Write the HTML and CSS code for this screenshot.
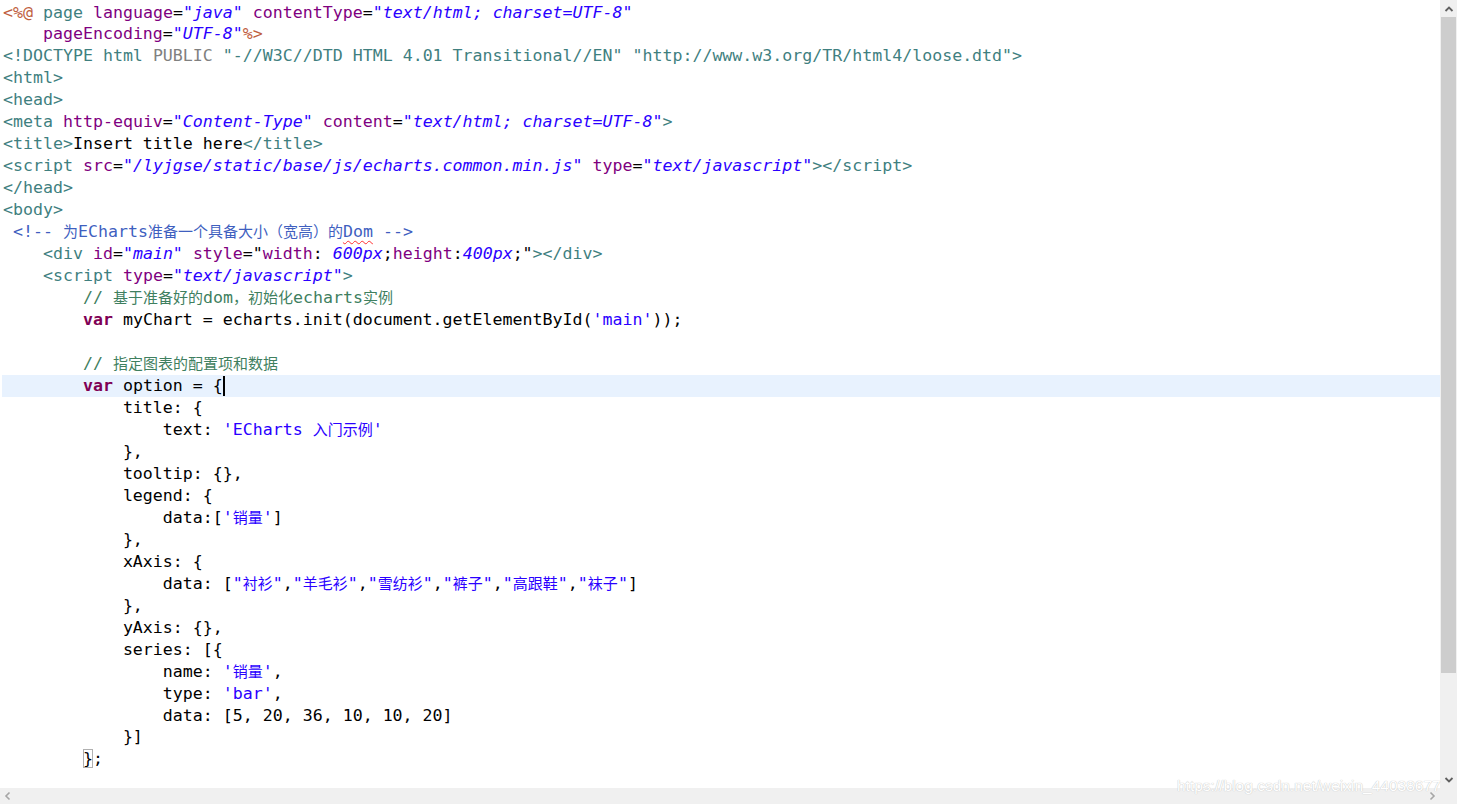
FILE: index.html
```html
<!DOCTYPE html>
<html>
<head>
<meta charset="utf-8">
<link rel="stylesheet" href="styles.css">
</head>
<body>
<div class="editor">
  <div class="left">
    <div class="code">
<div class="ln"><span class="dl">&lt;%@</span> <span class="tg">page</span> <span class="an">language</span>=<span class="av">"java"</span> <span class="an">contentType</span>=<span class="av">"text/html; charset=UTF-8"</span></div>
<div class="ln">    <span class="an">pageEncoding</span>=<span class="av">"UTF-8"</span><span class="dl">%&gt;</span></div>
<div class="ln"><span class="tg">&lt;!DOCTYPE html</span> <span class="dt">PUBLIC</span> <span class="dr">"-//W3C//DTD HTML 4.01 Transitional//EN"</span> <span class="dr">"http://www.w3.org/TR/html4/loose.dtd"</span><span class="tg">&gt;</span></div>
<div class="ln"><span class="tg">&lt;html&gt;</span></div>
<div class="ln"><span class="tg">&lt;head&gt;</span></div>
<div class="ln"><span class="tg">&lt;meta</span> <span class="an">http-equiv</span>=<span class="av">"Content-Type"</span> <span class="an">content</span>=<span class="av">"text/html; charset=UTF-8"</span><span class="tg">&gt;</span></div>
<div class="ln"><span class="tg">&lt;title&gt;</span>Insert title here<span class="tg">&lt;/title&gt;</span></div>
<div class="ln"><span class="tg">&lt;script</span> <span class="an">src</span>=<span class="av">"/lyjgse/static/base/js/echarts.common.min.js"</span> <span class="an">type</span>=<span class="av">"text/javascript"</span><span class="tg">&gt;&lt;/script&gt;</span></div>
<div class="ln"><span class="tg">&lt;/head&gt;</span></div>
<div class="ln"><span class="tg">&lt;body&gt;</span></div>
<div class="ln"><span class="cm"> &lt;!-- <span class="c">为</span>ECharts<span class="c">准备一个具备大小（宽高）的</span><span class="sp">Dom</span> --&gt;</span></div>
<div class="ln">    <span class="tg">&lt;div</span> <span class="an">id</span>=<span class="av">"main"</span> <span class="an">style</span>="<span class="an">width</span>:<span class="av"> 600px</span>;<span class="an">height</span>:<span class="av">400px</span>;"<span class="tg">&gt;&lt;/div&gt;</span></div>
<div class="ln">    <span class="tg">&lt;script</span> <span class="an">type</span>=<span class="av">"text/javascript"</span><span class="tg">&gt;</span></div>
<div class="ln">        <span class="jc">// <span class="c">基于准备好的</span>dom<span class="c">，初始化</span>echarts<span class="c">实例</span></span></div>
<div class="ln">        <span class="kw">var</span> myChart = echarts.init(document.getElementById(<span class="st">'main'</span>));</div>
<div class="ln"> </div>
<div class="ln">        <span class="jc">// <span class="c">指定图表的配置项和数据</span></span></div>
<div class="ln cur">        <span class="kw">var</span> option = {<span class="caret"></span></div>
<div class="ln">            title: {</div>
<div class="ln">                text: <span class="st">'ECharts <span class="c">入门示例</span>'</span></div>
<div class="ln">            },</div>
<div class="ln">            tooltip: {},</div>
<div class="ln">            legend: {</div>
<div class="ln">                data:[<span class="st">'<span class="c">销量</span>'</span>]</div>
<div class="ln">            },</div>
<div class="ln">            xAxis: {</div>
<div class="ln">                data: [<span class="st">"<span class="c">衬衫</span>"</span>,<span class="st">"<span class="c">羊毛衫</span>"</span>,<span class="st">"<span class="c">雪纺衫</span>"</span>,<span class="st">"<span class="c">裤子</span>"</span>,<span class="st">"<span class="c">高跟鞋</span>"</span>,<span class="st">"<span class="c">袜子</span>"</span>]</div>
<div class="ln">            },</div>
<div class="ln">            yAxis: {},</div>
<div class="ln">            series: [{</div>
<div class="ln">                name: <span class="st">'<span class="c">销量</span>'</span>,</div>
<div class="ln">                type: <span class="st">'bar'</span>,</div>
<div class="ln">                data: [5, 20, 36, 10, 10, 20]</div>
<div class="ln">            }]</div>
<div class="ln">        <span class="bm">}</span>;</div>
    </div>
    <div class="hscroll">
      <svg class="arr" width="10" height="10" viewBox="0 0 10 10"><path d="M6.5 1.5 L3 5 L6.5 8.5" fill="none" stroke="#a6a6a6" stroke-width="1.6"/></svg>
      <svg class="arr" width="10" height="10" viewBox="0 0 10 10"><path d="M3.5 1.5 L7 5 L3.5 8.5" fill="none" stroke="#a6a6a6" stroke-width="1.6"/></svg>
    </div>
  </div>
  <div class="vscroll">
    <div class="vbtn"><svg width="10" height="10" viewBox="0 0 10 10"><path d="M1.5 7 L5 3.5 L8.5 7" fill="none" stroke="#606060" stroke-width="1.8"/></svg></div>
    <div class="thumb"></div>
    <div class="track"></div>
    <div class="vbtn"><svg width="10" height="10" viewBox="0 0 10 10"><path d="M1.5 3 L5 6.5 L8.5 3" fill="none" stroke="#606060" stroke-width="1.8"/></svg></div>
    <div class="corner"></div>
  </div>
  <div class="wm">https://blog.csdn.net/weixin_44038677</div>
</div>
</body>
</html>
```
FILE: styles.css
```css
html, body {
  margin: 0;
  padding: 0;
  background: #ffffff;
}
.editor {
  position: relative;
  display: flex;
  width: 1457px;
  height: 804px;
  overflow: hidden;
}
.left {
  flex: 1;
  display: flex;
  flex-direction: column;
  min-width: 0;
}
.code {
  flex: 1;
  padding: 1.5px 0 0 2px;
  font-family: "DejaVu Sans Mono", "Liberation Mono", monospace;
  font-size: 16.6px;
  color: #000000;
  overflow: hidden;
}
.ln {
  height: 21.98px;
  line-height: 21.98px;
  white-space: pre;
  padding-left: 1px;
}
.cur {
  background: #e8f2fe;
}
.c {
  font-family: "Noto Sans CJK SC", sans-serif;
  font-size: 15px;
  line-height: 1;
  font-style: normal;
}
.dl { color: #bf5f3f; }
.tg { color: #3f7f7f; }
.an { color: #7f007f; }
.av { color: #2a00ff; font-style: italic; }
.dt { color: #808080; }
.dr { color: #3f7f7f; }
.cm { color: #3f5fbf; }
.jc { color: #3f7f5f; }
.kw { color: #7f0055; font-weight: bold; }
.st { color: #2a00ff; }
.sp {
  text-decoration: underline wavy #ff3030;
  text-decoration-thickness: 1px;
  text-underline-offset: 3px;
}
.caret {
  display: inline-block;
  width: 2px;
  height: 20px;
  background: #000000;
  vertical-align: -5px;
}
.bm {
  outline: 1px solid #b0b0b0;
  outline-offset: -1px;
}
.hscroll {
  height: 16px;
  background: #f0f0f0;
  display: flex;
  align-items: center;
  justify-content: space-between;
  padding: 0 3px;
}
.vscroll {
  width: 17px;
  background: #f0f0f0;
  display: flex;
  flex-direction: column;
}
.vbtn {
  height: 17px;
  display: flex;
  align-items: center;
  justify-content: center;
}
.thumb {
  height: 656px;
  margin: 0 1px;
  background: #cdcdcd;
}
.track {
  flex: 1;
}
.corner {
  height: 16px;
}
.wm {
  position: absolute;
  left: 1177px;
  top: 777px;
  font-family: "Liberation Sans", Arial, sans-serif;
  font-size: 15.5px;
  color: #ffffff;
  text-shadow: 0 0 1px #c4c4c4, 0 0 1px #d0d0d0;
  white-space: nowrap;
}
```
